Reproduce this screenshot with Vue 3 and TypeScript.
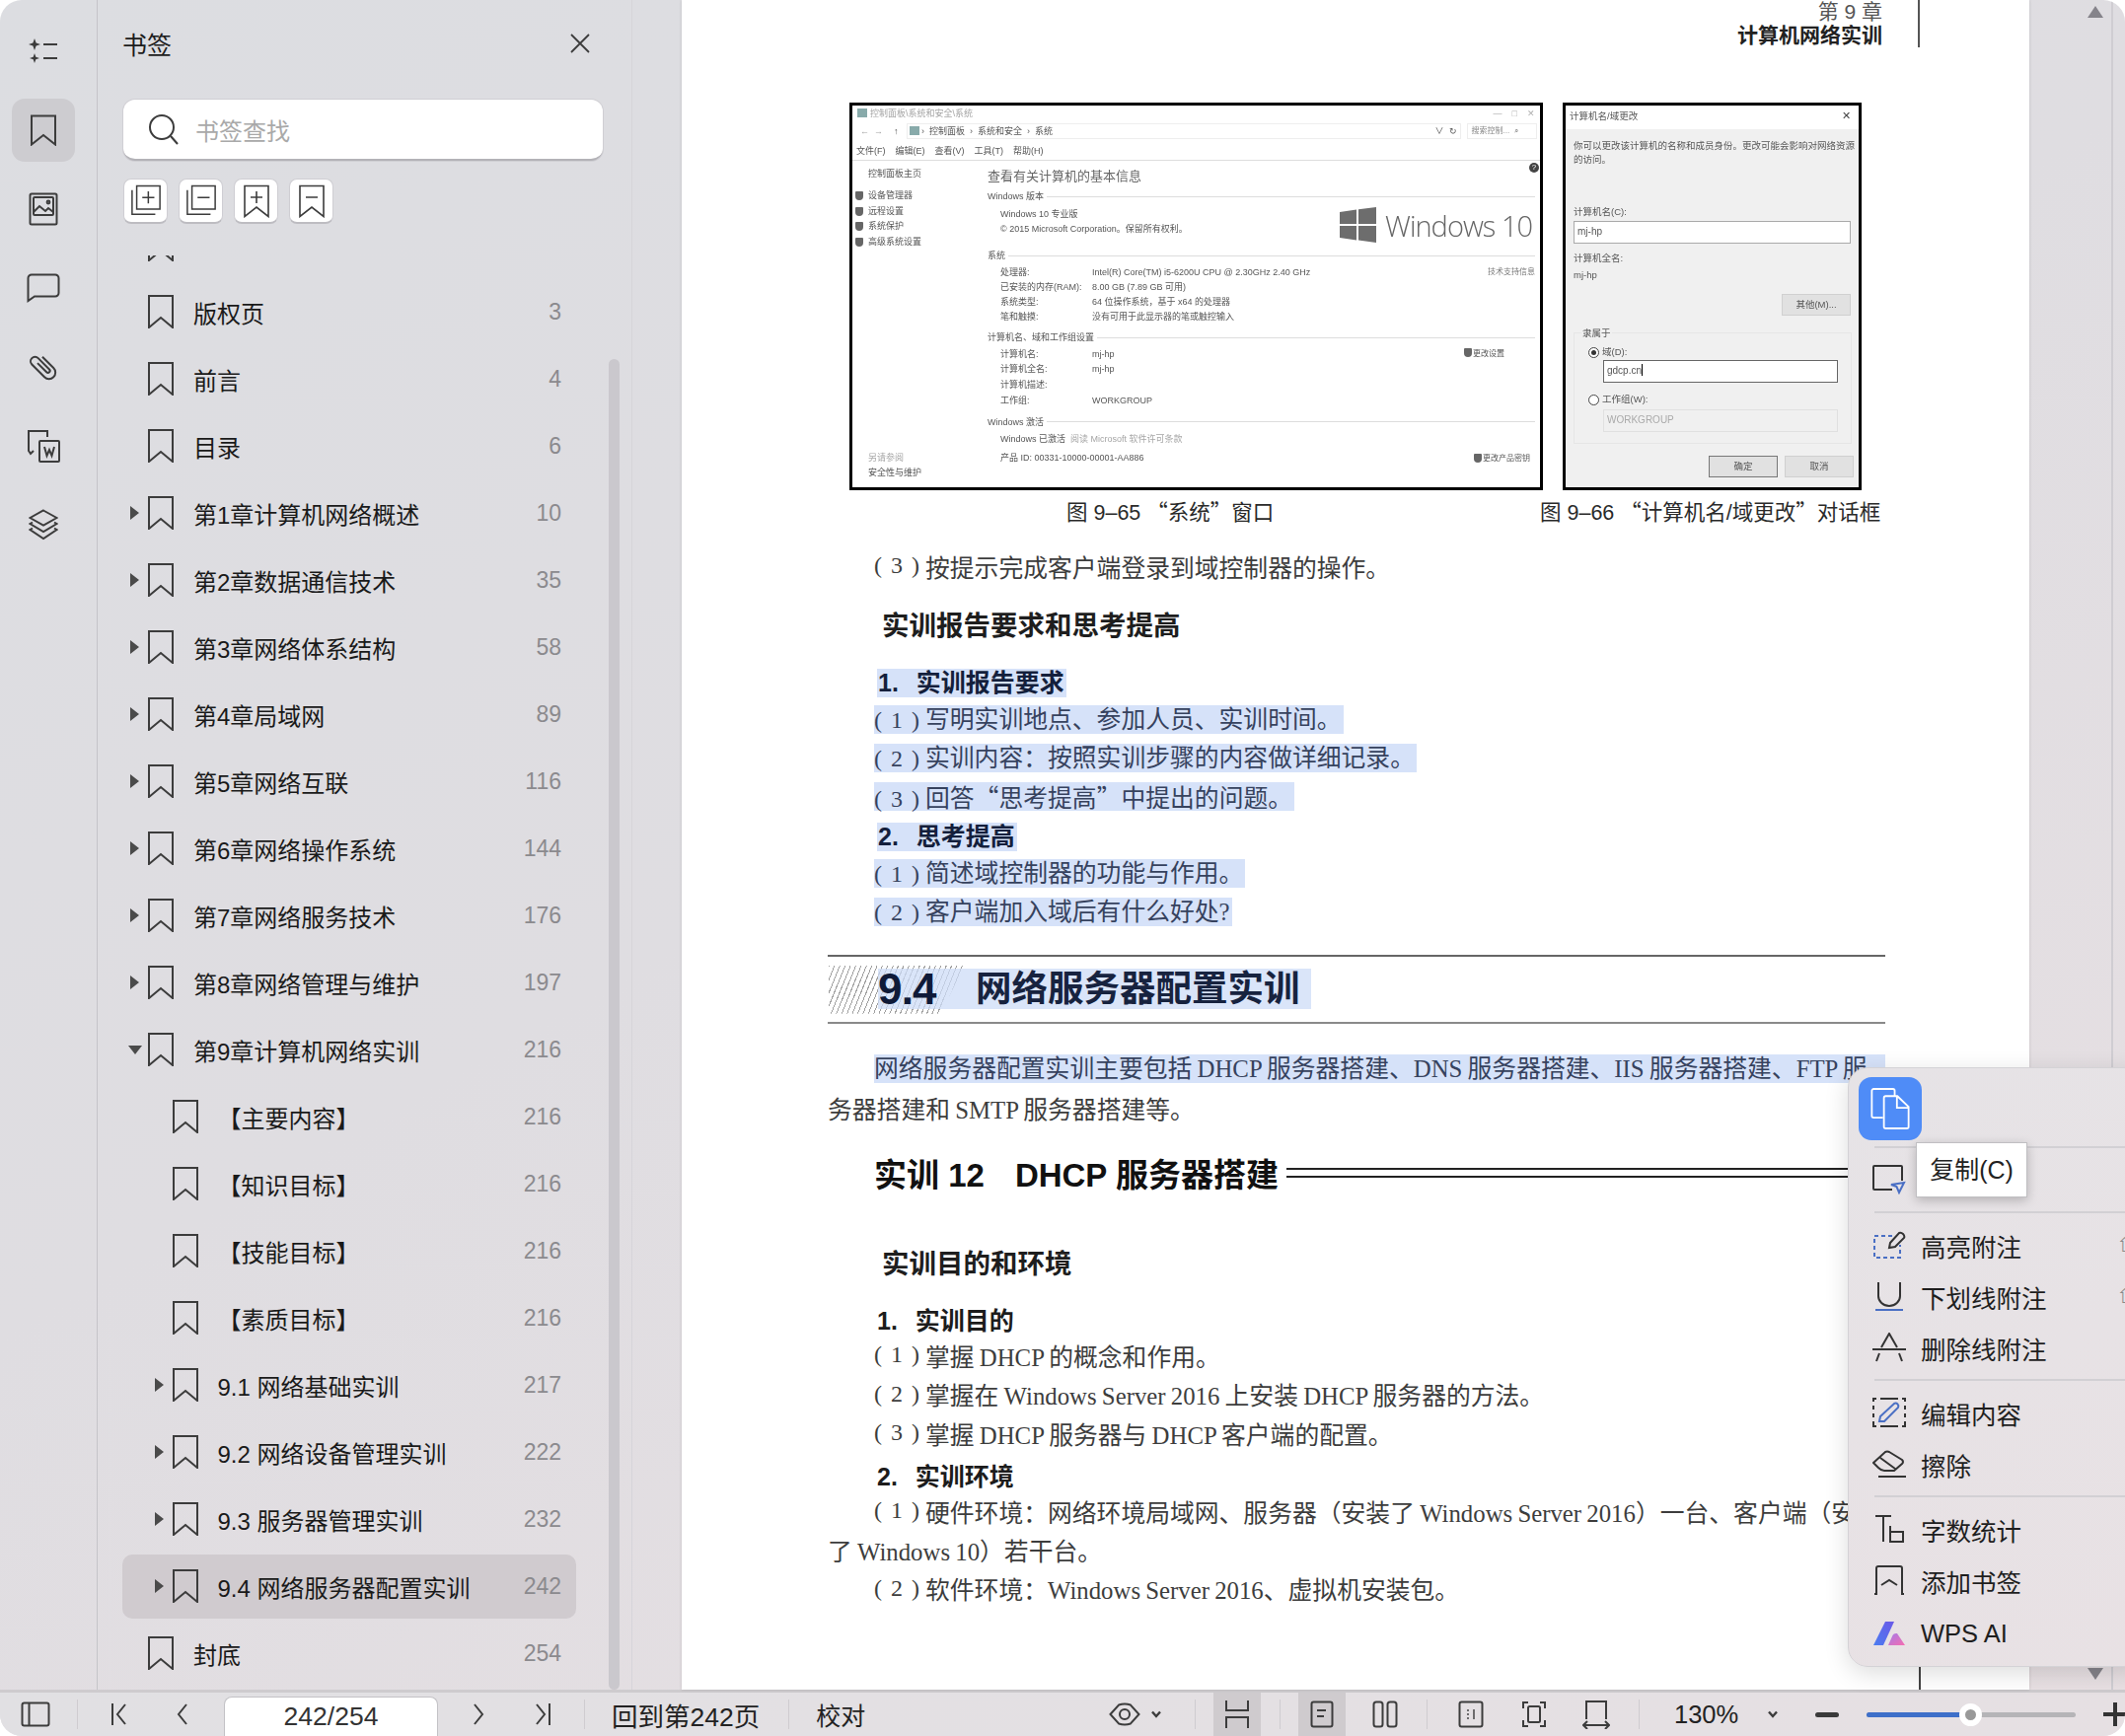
<script setup lang="ts">
interface Row { t: string; p: string; l?: number; a?: boolean; on?: boolean }
const rows: Row[] = [
  { t: '', p: '' },
  { t: '版权页', p: '3' },
  { t: '前言', p: '4' },
  { t: '目录', p: '6' },
  { t: '第1章计算机网络概述', p: '10', a: true },
  { t: '第2章数据通信技术', p: '35', a: true },
  { t: '第3章网络体系结构', p: '58', a: true },
  { t: '第4章局域网', p: '89', a: true },
  { t: '第5章网络互联', p: '116', a: true },
  { t: '第6章网络操作系统', p: '144', a: true },
  { t: '第7章网络服务技术', p: '176', a: true },
  { t: '第8章网络管理与维护', p: '197', a: true },
  { t: '第9章计算机网络实训', p: '216', a: true, on: true },
  { t: '【主要内容】', p: '216', l: 1 },
  { t: '【知识目标】', p: '216', l: 1 },
  { t: '【技能目标】', p: '216', l: 1 },
  { t: '【素质目标】', p: '216', l: 1 },
  { t: '9.1 网络基础实训', p: '217', l: 1, a: true },
  { t: '9.2 网络设备管理实训', p: '222', l: 1, a: true },
  { t: '9.3 服务器管理实训', p: '232', l: 1, a: true },
  { t: '9.4 网络服务器配置实训', p: '242', l: 1, a: true },
  { t: '封底', p: '254' }
]
const sideLinks = ['设备管理器', '远程设置', '系统保护', '高级系统设置']
const sysRows = [
  ['处理器:', 'Intel(R) Core(TM) i5-6200U CPU @ 2.30GHz   2.40 GHz'],
  ['已安装的内存(RAM):', '8.00 GB (7.89 GB 可用)'],
  ['系统类型:', '64 位操作系统，基于 x64 的处理器'],
  ['笔和触摸:', '没有可用于此显示器的笔或触控输入']
]
const nameRows = [
  ['计算机名:', 'mj-hp'],
  ['计算机全名:', 'mj-hp'],
  ['计算机描述:', ''],
  ['工作组:', 'WORKGROUP']
]
</script>

<template>
  <div class="app">
    <div class="main">
      <nav class="rail">
        <div class="rail-item">
          <svg width="32" height="28" viewBox="0 0 32 28" class="ic"><path class="solid" d="M7 1l1.600 4.400L13 7 8.600 8.600 7 13 5.400 8.600 1 7l4.400-1.600zM7 16l1.300 3.700L12 21l-3.700 1.300L7 26l-1.300-3.700L2 21l3.700-1.300z"/><path d="M16 7h14M16 21h14"/></svg>
        </div>
        <div class="rail-item">
          <div class="rail-on"><svg width="28" height="32" viewBox="0 0 28 32" class="ic"><path d="M2 1.500h24v29L14 21 2 30.500z"/></svg></div>
        </div>
        <div class="rail-item">
          <svg width="30" height="34" viewBox="0 0 30 34" class="ic"><rect x="1.500" y="1.500" width="27" height="31" rx="1.500"/><rect x="5" y="5" width="20" height="18" rx="1"/><path d="M5 20l6-6 6 5 3-3 5 4"/><circle cx="20" cy="10" r="1.400"/></svg>
        </div>
        <div class="rail-item">
          <svg width="34" height="30" viewBox="0 0 34 30" class="ic"><path d="M5 1.500h24a3.500 3.500 0 0 1 3.500 3.500v15a3.500 3.500 0 0 1-3.500 3.500H8L1.500 28V5A3.500 3.500 0 0 1 5 1.500z"/></svg>
        </div>
        <div class="rail-item">
          <svg width="34" height="34" viewBox="0 0 34 34" class="ic"><g transform="rotate(-45 17 17)"><path d="M23.500 9v16a6.500 6.500 0 0 1-13 0V7a4.500 4.500 0 0 1 9 0v16a2 2 0 0 1-4 0V10"/></g></svg>
        </div>
        <div class="rail-item">
          <svg width="34" height="34" viewBox="0 0 34 34" class="ic"><path d="M21 8V2H2v20l2 3 3-3"/><rect x="13" y="12" width="20" height="21" rx="1"/><path d="M18 18l2.500 9 2.500-6 2.500 6 2.500-9"/></svg>
        </div>
        <div class="rail-item">
          <svg width="30" height="32" viewBox="0 0 30 32" class="ic"><path d="M15 1.500 28.500 9 15 16.500 1.500 9zM4 13.500 1.500 15 15 23l13.500-8-2.500-1.500M4 19.500 1.500 21 15 30l13.500-9-2.500-1.500"/></svg>
        </div>
      </nav>

      <aside class="panel">
        <div class="panel-head">
          <span class="panel-title">书签</span>
          <svg class="close ic" width="22" height="22" viewBox="0 0 22 22"><path d="M2 2l18 18M20 2 2 20"/></svg>
        </div>
        <div class="search">
          <svg width="32" height="32" viewBox="0 0 32 32" class="ic"><circle cx="14" cy="14" r="12"/><path d="M23 23l7 8"/></svg>
          <span>书签查找</span>
        </div>
        <div class="tools">
          <div class="tool"><svg width="34" height="36" viewBox="0 0 34 36" class="ic thin"><path d="M7 1.500h25v25H7zM13 14h13M19.500 7.500v13"/><path d="M2 6v26h25"/></svg></div>
          <div class="tool"><svg width="34" height="36" viewBox="0 0 34 36" class="ic thin"><path d="M7 1.500h25v25H7zM13 14h13"/><path d="M2 6v26h25"/></svg></div>
          <div class="tool"><svg width="28" height="34" viewBox="0 0 28 34" class="ic thin"><path d="M2 1.500h24v31L14 23 2 32.500zM8 13h12M14 7v12"/></svg></div>
          <div class="tool"><svg width="28" height="34" viewBox="0 0 28 34" class="ic thin"><path d="M2 1.500h24v31L14 23 2 32.500zM8 13h12"/></svg></div>
        </div>
        <div class="list">
          <div class="list-in">
            <div v-for="(r, i) in rows" :key="i" class="row" :class="{ nested: r.l, cur: i === 20 }">
              <span class="arrow"><i v-if="r.a" :class="{ down: r.on }"></i></span>
              <svg width="26" height="34" viewBox="0 0 26 34" class="ic bm"><path d="M1 1h24v32L13 23 1 33z"/></svg>
              <span class="row-t">{{ r.t }}</span>
              <span class="row-p">{{ r.p }}</span>
            </div>
          </div>
        </div>
        <div class="thumb"></div>
      </aside>

      <section class="page">
        <div class="doc">
          <div class="head"><div class="h1">第 9 章</div><div class="h2">计算机网络实训</div></div>
          <div class="figs">
            <div class="fig fig-a">
              <div class="w-title">
                <span class="pc"></span><span class="dim">控制面板\系统和安全\系统</span>
                <span class="w-ctl">—&nbsp;&nbsp;&nbsp;&nbsp;□&nbsp;&nbsp;&nbsp;&nbsp;✕</span>
              </div>
              <div class="w-addr">
                <span class="dim">←&nbsp;&nbsp;→&nbsp;&nbsp;</span><b>↑</b>
                <div class="addr-box"><span class="pc"></span>&nbsp;›&nbsp;&nbsp;控制面板&nbsp;&nbsp;›&nbsp;&nbsp;系统和安全&nbsp;&nbsp;›&nbsp;&nbsp;系统<span class="addr-end">∨&nbsp;&nbsp;↻</span></div>
                <div class="find">搜索控制...&nbsp;&nbsp;⌕</div>
              </div>
              <div class="w-menu"><span>文件(F)</span><span>编辑(E)</span><span>查看(V)</span><span>工具(T)</span><span>帮助(H)</span></div>
              <div class="w-body">
                <div class="w-side">
                  <div class="home">控制面板主页</div>
                  <div v-for="s in sideLinks" :key="s" class="link"><span class="shield"></span>{{ s }}</div>
                  <div class="also">
                    <div class="dim">另请参阅</div>
                    <div>安全性与维护</div>
                  </div>
                </div>
                <div class="w-main">
                  <div class="help">?</div>
                  <div class="w-h">查看有关计算机的基本信息</div>
                  <div class="sec">Windows 版本</div>
                  <div class="w-ver">
                    <div class="ver-t">
                      <div class="kv">Windows 10 专业版</div>
                      <div class="kv">© 2015 Microsoft Corporation。保留所有权利。</div>
                    </div>
                    <div class="logo">
                      <svg width="37" height="36" viewBox="0 0 37 36"><path fill="#6d6d6d" d="M0 5l17-2.500V17H0zM19 2.200 37 0v17H19zM0 19h17v14.500L0 31zM19 19h18v17l-18-2.500z"/></svg>
                      <span>Windows 10</span>
                    </div>
                  </div>
                  <div class="sec sec2">系统</div>
                  <div v-for="r in sysRows" :key="r[0]" class="kv grid"><span>{{ r[0] }}</span><span>{{ r[1] }}</span></div>
                  <span class="tech">技术支持信息</span>
                  <div class="sec sec3">计算机名、域和工作组设置</div>
                  <div v-for="r in nameRows" :key="r[0]" class="kv grid tall"><span>{{ r[0] }}</span><span>{{ r[1] }}</span></div>
                  <span class="change"><i class="shield"></i>更改设置</span>
                  <div class="sec sec4">Windows 激活</div>
                  <div class="kv act">Windows 已激活&nbsp;&nbsp;<span class="dim">阅读 Microsoft 软件许可条款</span></div>
                  <div class="kv pid">产品 ID: 00331-10000-00001-AA886<span class="key"><i class="shield"></i>更改产品密钥</span></div>
                </div>
              </div>
            </div>
            <div class="fig fig-b">
              <div class="d-title"><span>计算机名/域更改</span><span class="d-x">✕</span></div>
              <div class="d-body">
                <div class="d-desc">你可以更改该计算机的名称和成员身份。更改可能会影响对网络资源的访问。</div>
                <div class="d-label">计算机名(C):</div>
                <div class="d-input">mj-hp</div>
                <div class="d-label l2">计算机全名:</div>
                <div class="d-val">mj-hp</div>
                <div class="d-more"><span class="d-btn">其他(M)...</span></div>
                <div class="d-set">
                  <span class="d-leg">隶属于</span>
                  <div class="d-radio"><i class="r on"></i>域(D):</div>
                  <div class="d-input in2">gdcp.cn<b></b></div>
                  <div class="d-radio r2"><i class="r"></i>工作组(W):</div>
                  <div class="d-input in2 off">WORKGROUP</div>
                </div>
                <div class="d-foot"><span class="d-btn def">确定</span><span class="d-btn">取消</span></div>
              </div>
            </div>
          </div>
          <div class="caps">
            <span class="cap c1">图 9–65 <span class="q">“</span>系统<span class="q">”</span>窗口</span>
            <span class="cap">图 9–66 <span class="q">“</span>计算机名/域更改<span class="q">”</span>对话框</span>
          </div>

          <div class="ln in mt25"><span class="n">( 3 )</span>按提示完成客户端登录到域控制器的操作。</div>
          <h3 class="subh mt19">实训报告要求和思考提高</h3>
          <div class="lnb mt19"><span class="sel b">1.&nbsp;&nbsp;实训报告要求</span></div>
          <div class="ln in"><span class="sel"><span class="n">( 1 )</span>写明实训地点、参加人员、实训时间。</span></div>
          <div class="ln in"><span class="sel"><span class="n">( 2 )</span>实训内容：按照实训步骤的内容做详细记录。</span></div>
          <div class="ln in"><span class="sel"><span class="n">( 3 )</span>回答<span class="q">“</span>思考提高<span class="q">”</span>中提出的问题。</span></div>
          <div class="lnb"><span class="sel b">2.&nbsp;&nbsp;思考提高</span></div>
          <div class="ln in"><span class="sel"><span class="n">( 1 )</span>简述域控制器的功能与作用。</span></div>
          <div class="ln in"><span class="sel"><span class="n">( 2 )</span>客户端加入域后有什么好处?</span></div>

          <div class="sect">
            <h2 class="sect-t"><span class="s-n">9.4</span><span class="s-t">网络服务器配置实训</span></h2>
          </div>

          <div class="para">
            <div class="ln in"><span class="sel wide">网络服务器配置实训主要包括 DHCP 服务器搭建、DNS 服务器搭建、IIS 服务器搭建、FTP 服</span></div>
            <div class="ln">务器搭建和 SMTP 服务器搭建等。</div>
          </div>

          <div class="lab">
            <span>实训 12<span class="gap"></span>DHCP 服务器搭建</span><i></i>
          </div>
          <h3 class="subh mt50">实训目的和环境</h3>
          <div class="block2">
            <div class="lnb plain"><span class="b">1.&nbsp;&nbsp;实训目的</span></div>
            <div class="ln in"><span class="n">( 1 )</span>掌握 DHCP 的概念和作用。</div>
            <div class="ln in"><span class="n">( 2 )</span>掌握在 Windows Server 2016 上安装 DHCP 服务器的方法。</div>
            <div class="ln in"><span class="n">( 3 )</span>掌握 DHCP 服务器与 DHCP 客户端的配置。</div>
            <div class="lnb plain"><span class="b">2.&nbsp;&nbsp;实训环境</span></div>
            <div class="ln in"><span class="n">( 1 )</span>硬件环境：网络环境局域网、服务器（安装了 Windows Server 2016）一台、客户端（安装</div>
            <div class="ln">了 Windows 10）若干台。</div>
            <div class="ln in"><span class="n">( 2 )</span>软件环境：Windows Server 2016、虚拟机安装包。</div>
          </div>
        </div>
        <span class="tail"></span>
      </section>

      <div class="gutter">
        <div class="gut-bar">
          <svg width="16" height="12" viewBox="0 0 16 12"><path fill="#85838a" d="M8 0l8 12H0z"/></svg>
          <svg width="16" height="12" viewBox="0 0 16 12"><path fill="#85838a" d="M8 12 0 0h16z"/></svg>
        </div>
      </div>
    </div>

    <footer class="bar">
      <div class="slot s-first"><svg width="30" height="26" viewBox="0 0 30 26" class="ic"><rect x="1.500" y="1.500" width="27" height="23" rx="2"/><path d="M8.500 2v22"/></svg></div>
      <i class="sep m18"></i>
      <div class="slot m18"><svg width="18" height="24" viewBox="0 0 18 24" class="ic"><path d="M2 1v22M15 2 7 12l8 10"/></svg></div>
      <div class="slot m16"><svg width="14" height="24" viewBox="0 0 14 24" class="ic"><path d="M11 2 3 12l8 10"/></svg></div>
      <div class="page-in">242/254</div>
      <div class="slot m17"><svg width="14" height="24" viewBox="0 0 14 24" class="ic"><path d="M3 2l8 10-8 10"/></svg></div>
      <div class="slot m17"><svg width="18" height="24" viewBox="0 0 18 24" class="ic"><path d="M16 1v22M3 2l8 10L3 22"/></svg></div>
      <i class="sep m18"></i>
      <span class="btn-t back">回到第242页</span>
      <i class="sep m29"></i>
      <span class="btn-t proof">校对</span>
      <span class="spring"></span>
      <div class="right">
        <div class="slot w40"><svg width="32" height="24" viewBox="0 0 32 24" class="ic"><path d="M1.500 12 10 2.500q6-2 12 0L30.500 12 22 21.500q-6 2-12 0z"/><circle cx="16" cy="12" r="5"/></svg></div>
        <div class="slot w24"><svg width="12" height="8" viewBox="0 0 12 8" class="ic bold"><path d="M2 1.500l4 4.500 4-4.500"/></svg></div>
        <i class="sep m27"></i>
        <div class="slot on m18"><svg width="26" height="28" viewBox="0 0 26 28" class="ic"><path d="M2 0v10h22V0M2 28V17h22v11"/></svg></div>
        <i class="sep m19"></i>
        <div class="slot on m18"><svg width="24" height="28" viewBox="0 0 24 28" class="ic"><rect x="1.500" y="1.500" width="21" height="25" rx="2"/><path d="M7 10h9M7 16h7"/></svg></div>
        <div class="slot m16"><svg width="26" height="28" viewBox="0 0 26 28" class="ic"><rect x="1.500" y="1.500" width="9" height="25" rx="2.500"/><rect x="15.500" y="1.500" width="9" height="25" rx="2.500"/></svg></div>
        <i class="sep m18"></i>
        <div class="slot m20"><svg width="26" height="28" viewBox="0 0 26 28" class="ic"><rect x="1.500" y="1.500" width="23" height="25" rx="2"/><path class="hair" d="M10 9v2M10 13v2M10 17v2M16 9v10"/></svg></div>
        <div class="slot m16"><svg width="26" height="28" viewBox="0 0 26 28" class="ic"><path d="M7 2H2v6M19 2h5v6M7 26H2v-6M19 26h5v-6"/><rect x="7" y="6" width="12" height="16" rx="1.500"/></svg></div>
        <div class="slot m15"><svg width="28" height="30" viewBox="0 0 28 30" class="ic"><path d="M4 20V2h20v18"/><path d="M1 26h26M5 22l-4 4 4 4M23 22l4 4-4 4"/></svg></div>
        <i class="sep m19"></i>
        <span class="btn-t zoom">130%</span>
        <div class="slot w24 m21"><svg width="12" height="8" viewBox="0 0 12 8" class="ic bold"><path d="M2 1.500l4 4.500 4-4.500"/></svg></div>
        <div class="slot w40 m23"><span class="minus"></span></div>
        <div class="slider">
          <span class="fill"></span>
          <span class="knob"></span>
        </div>
        <div class="slot w40 m20"><span class="plus"></span></div>
      </div>
    </footer>

    <div class="menu">
      <div class="copy">
        <svg width="44" height="46" viewBox="0 0 44 46" fill="none" stroke="#fff" stroke-width="2"><path d="M14 33H3.500a2 2 0 0 1-2-2V3a2 2 0 0 1 2-2H25a2 2 0 0 1 2 2v6"/><path d="M17 9h13l12.500 12v22a2 2 0 0 1-2 2H17a2 2 0 0 1-2-2V11a2 2 0 0 1 2-2zM29.500 9.500V22h13"/></svg>
      </div>
      <div class="tip">复制(C)</div>
      <div class="m-sep"></div>
      <div class="item">
        <span class="m-ic"><svg width="34" height="30" viewBox="0 0 34 30" fill="none" stroke="#333" stroke-width="2"><path d="M20 25H2a1 1 0 0 1-1-1V2a1 1 0 0 1 1-1h27a1 1 0 0 1 1 1v14"/><path stroke="#4a6fc4" d="M19 20l13-2-5 10-2.500-6z"/></svg></span>全选(A)
      </div>
      <div class="m-sep"></div>
      <div class="item">
        <span class="m-ic"><svg width="34" height="28" viewBox="0 0 34 28" fill="none" stroke="#333" stroke-width="2"><path stroke="#4a6fc4" stroke-dasharray="4 3" d="M20 5H2v22h26V14"/><path d="M18 12l9-10q2-1 4 1t1 4l-9 9-6 1z"/></svg></span>高亮附注<span class="key-hint">⇧</span>
      </div>
      <div class="item">
        <span class="m-ic"><svg width="30" height="30" viewBox="0 0 30 30" fill="none" stroke="#333" stroke-width="2"><path d="M4 1v14a11 10 0 0 0 22 0V1"/><path stroke="#4a6fc4" d="M1 29h28"/></svg></span>下划线附注<span class="key-hint">⇧</span>
      </div>
      <div class="item">
        <span class="m-ic"><svg width="34" height="30" viewBox="0 0 34 30" fill="none" stroke="#333" stroke-width="2"><path d="M9 15 17 1l8 14M4 29l3-8M30 29l-3-8"/><path d="M0 17h34"/></svg></span>删除线附注
      </div>
      <div class="m-sep"></div>
      <div class="item">
        <span class="m-ic"><svg width="34" height="32" viewBox="0 0 34 32" fill="none" stroke="#333" stroke-width="2"><path stroke-dasharray="4 4" d="M1 1v30M33 1v30"/><path d="M0 2h4M8 2h18M30 2h4M0 30h4M8 30h18M30 30h4"/><path stroke="#4a6fc4" d="M7 25l1-5L22 7q2-1 3.500.5t.5 3.500L12 25z"/></svg></span>编辑内容
      </div>
      <div class="item">
        <span class="m-ic"><svg width="34" height="28" viewBox="0 0 34 28" fill="none" stroke="#333" stroke-width="2"><path d="M1 13 13 2q2-1 4 0l13 8q2 2 0 4l-8 7H12q-3 0-6-3zM8 8l15 11M6 27h28"/></svg></span>擦除
      </div>
      <div class="m-sep"></div>
      <div class="item">
        <span class="m-ic"><svg width="30" height="30" viewBox="0 0 30 30" fill="none" stroke="#333" stroke-width="2"><path d="M1 2h16M9 2v26"/><path d="M16 12v16h13V18H16"/></svg></span>字数统计
      </div>
      <div class="item">
        <span class="m-ic"><svg width="30" height="30" viewBox="0 0 30 30" fill="none" stroke="#333" stroke-width="2"><path d="M2 29V3a2 2 0 0 1 2-2h22a2 2 0 0 1 2 2v26M7 20l8-5 8 5M0 29h3M27 29h3"/></svg></span>添加书签
      </div>
      <div class="item last">
        <span class="m-ic"><svg width="32" height="24" viewBox="0 0 32 24"><defs><linearGradient id="gb" x1="0" y1="1" x2="1" y2="0"><stop offset="0" stop-color="#4c7df0"/><stop offset="1" stop-color="#6a59e8"/></linearGradient><linearGradient id="gp" x1="0" y1="0" x2="1" y2="1"><stop offset="0" stop-color="#a57be8"/><stop offset="1" stop-color="#f66db0"/></linearGradient></defs><path fill="url(#gb)" d="M0 24 12 0h9L10 24z"/><path fill="url(#gp)" d="M15 24l4-9q1-3 4-3h1l8 12z"/></svg></span>WPS AI
      </div>
    </div>
  </div>
</template>

<style scoped>
.app {
  position: relative;
  width: 2154px;
  height: 1760px;
  overflow: hidden;
  border-radius: 22px;
  display: flex;
  flex-direction: column;
  font-family: "Liberation Sans", "Noto Sans CJK SC", sans-serif;
  color: #1c1c1c;
  background: linear-gradient(150deg, #dcdde1 0%, #dfdde1 45%, #e8e0e3 100%);
}
.main { display: flex; height: 1713px; }
.ic { fill: none; stroke: #3c3c3c; stroke-width: 2; }
.ic.thin { stroke-width: 1.6; }
.ic.bold { stroke-width: 2.400; }
.ic .solid { fill: #3c3c3c; stroke: none; }
.ic .hair { stroke-width: 1.4; }

.rail {
  width: 98px;
  flex: none;
  border-right: 1px solid #c5c4c9;
  padding-top: 12px;
  display: flex;
  flex-direction: column;
  box-sizing: content-box;
}
.rail-item { height: 80px; width: 88px; display: flex; align-items: center; justify-content: center; }
.rail-on { width: 64px; height: 64px; border-radius: 13px; background: #cdccd0; display: flex; align-items: center; justify-content: center; }

.panel { position: relative; width: 592px; flex: none; display: flex; flex-direction: column; padding-left: 26px; box-sizing: border-box; }
.panel::after { content: ""; position: absolute; left: 541px; top: 0; bottom: 0; width: 1px; background: #d6d4d9; }
.panel-head { height: 88px; display: flex; align-items: center; justify-content: space-between; padding-right: 92px; flex: none; }
.panel-title { font-size: 25px; margin-left: -1px; }
.close { stroke-width: 1.8; }
.search {
  width: 486px; height: 62px; margin-top: 13px; background: #fff; border-radius: 12px; flex: none;
  box-sizing: border-box; border-bottom: 2px solid #b3b2b7; box-shadow: 0 0 0 1px #d0cfd4;
  display: flex; align-items: center; padding-left: 25px; gap: 16px; font-size: 24px; color: #a9a9a9;
}
.tools { display: flex; gap: 11px; margin-top: 18px; flex: none; }
.tool {
  width: 45px; height: 46px; background: #fff; border-radius: 8px; box-sizing: border-box;
  border: 1px solid #cfced3; border-bottom: 2px solid #bdbcc1; display: flex; align-items: center; justify-content: center;
}
.tool svg { width: 32px; height: 34px; }
.list { margin-top: 32px; margin-left: -1px; width: 460px; flex: 1; overflow: hidden; }
.list-in { margin-top: -45px; }
.row { height: 68px; display: flex; align-items: center; padding: 0 15px 0 8px; position: relative; }
.row.nested { padding-left: 32.500px; }
.row.cur::before { content: ""; position: absolute; left: 0; right: 0; top: 1.500px; bottom: 1.500px; background: #d0cbcf; border-radius: 10px; z-index: -1; }
.row.cur { z-index: 0; }
.arrow { width: 18px; flex: none; display: flex; }
.arrow i { width: 0; height: 0; border-left: 9px solid #4a4a4a; border-top: 7px solid transparent; border-bottom: 7px solid transparent; }
.arrow i.down { border-left: 7px solid transparent; border-right: 7px solid transparent; border-top: 9px solid #4a4a4a; border-bottom: 0; margin-left: -2px; }
.bm { flex: none; }
.row-t { margin-left: 20px; font-size: 24px; white-space: nowrap; flex: 1; color: #1a1a1a; }
.row-p { font-size: 23px; color: #8b8a8e; padding-top: 1px; }
.thumb { position: absolute; left: 518px; top: 364px; bottom: 0; width: 11px; background: #cac8cd; border-radius: 6px; }

.page {
  position: relative; width: 1366px; flex: none; background: #fff; overflow: hidden;
  box-shadow: 0 0 3px rgba(0,0,0,.15);
}
.doc { padding: 0 146px 0 148px; }
.head { height: 48px; margin-right: -35px; padding-right: 36px; border-right: 2px solid #555; text-align: right; line-height: 24px; }
.h1 { font-size: 21px; color: #555; }
.h2 { font-size: 21px; font-weight: 700; color: #222; }
.figs { display: flex; gap: 20px; margin: 56px 0 0 22px; }
.fig { height: 393px; box-sizing: border-box; border: 3px solid #000; flex: none; overflow: hidden; font-size: 9px; color: #555; filter: blur(.35px); position: relative; }
.fig-a { width: 703px; background: #fff; }
.fig-b { width: 303px; background: #f0f0f0; }
.dim { color: #a5a5a5; }
.w-title { height: 15px; display: flex; align-items: center; padding: 0 5px; gap: 3px; }
.w-ctl { margin-left: auto; color: #b0b0b0; }
.pc { width: 10px; height: 9px; background: #8aa; display: inline-block; }
.w-addr { height: 21px; display: flex; align-items: center; padding: 0 3px 0 8px; gap: 6px; }
.addr-box { width: 558px; height: 14px; display: flex; align-items: center; border: 1px solid #eee; padding-left: 2px; flex: none; margin-left: 2px; }
.addr-end { margin-left: auto; padding-right: 3px; }
.find { flex: 1; height: 14px; border: 1px solid #eee; color: #888; font-size: 8px; line-height: 14px; padding-left: 4px; white-space: nowrap; overflow: hidden; }
.w-menu { height: 19px; display: flex; align-items: center; gap: 10px; padding-left: 4px; border-bottom: 1px solid #ddd; }
.w-body { display: flex; height: 330px; }
.w-side { width: 137px; flex: none; padding-left: 16px; position: relative; box-sizing: border-box; }
.home { margin-top: 6px; height: 15px; line-height: 15px; margin-bottom: 7px; }
.link { height: 15.500px; line-height: 15.500px; display: flex; align-items: center; position: relative; }
.shield { width: 8px; height: 9px; display: inline-block; background: #666; border-radius: 1px 1px 4px 4px; }
.link .shield { position: absolute; left: -13px; }
.also { position: absolute; top: 294px; left: 16px; line-height: 15px; }
.w-main { flex: 1; position: relative; padding-right: 5px; }
.help { position: absolute; right: 1px; top: 2px; width: 10px; height: 10px; border-radius: 50%; background: #444; color: #fff; font-size: 8px; line-height: 10px; text-align: center; }
.w-h { font-size: 13px; margin-top: 6.500px; height: 18px; line-height: 18px; color: #666; }
.sec { margin-top: 4.500px; height: 14px; line-height: 14px; display: flex; align-items: center; gap: 3px; }
.sec::after { content: ""; flex: 1; height: 1px; background: #ddd; }
.sec2 { margin-top: 4px; margin-bottom: 3px; }
.sec3 { margin-top: 6px; margin-bottom: 2.500px; }
.sec4 { margin-top: 6px; }
.w-ver { display: flex; height: 42px; }
.ver-t { padding-top: 3.500px; }
.kv { height: 15px; line-height: 15px; padding-left: 13px; white-space: nowrap; }
.grid { display: flex; }
.grid > span:first-child { width: 93px; }
.tall { height: 15.800px; line-height: 15.800px; }
.logo { margin-left: auto; display: flex; align-items: center; gap: 9px; height: 42px; padding-right: 3px; margin-top: 1px; }
.logo span { font-family: "Open Sans", "Liberation Sans", sans-serif; font-weight: 300; font-size: 29px; color: #666; letter-spacing: -1px; white-space: nowrap; }
.tech { position: absolute; right: 5px; top: 106px; font-size: 8px; color: #777; }
.change { position: absolute; right: 36px; top: 189px; display: flex; align-items: center; gap: 1px; font-size: 8px; }
.kv.act { margin-top: 3px; }
.kv.pid { margin-top: 4px; display: flex; }
.key { margin-left: auto; display: flex; align-items: center; gap: 1px; padding-right: 5px; font-size: 8px; }

.d-title { height: 24px; background: #fff; display: flex; align-items: center; justify-content: space-between; padding: 0 8px 4px 4px; box-sizing: border-box; font-size: 9.500px; }
.d-x { font-size: 11px; color: #444; }
.d-body { padding: 10px 8px 0 8px; font-size: 9.500px; line-height: 14px; }
.d-desc { height: 29px; width: 285px; }
.d-label { margin-top: 38px; height: 14px; }
.d-label.l2 { margin-top: 8px; }
.d-input { height: 23px; margin-top: 2px; background: #fff; border: 1px solid #aaa; box-sizing: border-box; padding-left: 3px; line-height: 20px; font-size: 10px; }
.d-val { margin-top: 3px; height: 14px; }
.d-more { display: flex; justify-content: flex-end; margin-top: 12px; }
.d-btn { width: 70px; height: 22px; background: #e1e1e1; border: 1px solid #d0d0d0; box-sizing: border-box; text-align: center; line-height: 20px; display: inline-block; font-size: 9.500px; }
.d-btn.def { border: 1.500px solid #777; }
.d-set { position: relative; margin-top: 17px; width: 282px; height: 113px; box-sizing: border-box; border: 1px solid #e6e6e6; padding: 12px 14px 0 14px; }
.d-leg { position: absolute; left: 7px; top: -7px; background: #f0f0f0; padding: 0 1px; }
.d-radio { display: flex; align-items: center; gap: 3px; height: 14px; }
.d-radio.r2 { margin-top: 10px; }
.r { width: 9px; height: 9px; border: 1px solid #444; border-radius: 50%; background: #fff; display: block; position: relative; }
.r.on::after { content: ""; position: absolute; inset: 2px; border-radius: 50%; background: #333; }
.in2 { margin: 1px 0 0 15px; width: 238px; border-color: #666; }
.in2 b { display: inline-block; width: 1px; height: 12px; background: #000; vertical-align: -2px; }
.in2.off { margin-top: 3px; background: #f0f0f0; border-color: #e0e0e0; color: #aaa; }
.d-foot { display: flex; justify-content: flex-end; gap: 7px; margin-top: 12px; width: 284px; }

.caps { display: flex; margin: 9px 0 0 242px; line-height: 24px; font-size: 21.500px; color: #2a2a2a; white-space: nowrap; }
.c1 { width: 480px; flex: none; }
.q { font-family: "Noto Sans CJK SC", sans-serif; }

.ln, .lnb {
  height: 39.050px; display: flex; align-items: center; white-space: nowrap; box-sizing: border-box;
  font-family: "Liberation Serif", "Noto Sans CJK SC", serif; font-size: 24.800px; color: #3d3d3d; word-spacing: -1px;
  padding-bottom: 6px;
}
.para .ln { height: 39.300px; padding-bottom: 8px; }
.block2 { margin-top: 17px; }
.block2 .ln, .block2 .lnb { height: 39.450px; }
.block2 .ln { padding-bottom: 8px; }
.in { padding-left: 47px; }
.lnb { padding-left: 50px; font-family: "Liberation Sans", "Noto Sans CJK SC", sans-serif; padding-bottom: 2px; word-spacing: 0; }
.lnb.plain { color: #1c1c1c; }
.n { display: inline-block; width: 52px; word-spacing: 3px; white-space: pre; font-size: 24px; }
.sel { display: inline-block; height: 29px; line-height: 29px; background: #d6e2f9; color: #36425e; padding-right: 2px; }
.b { font-weight: 700; font-size: 25px; color: #141f3c; word-spacing: 2px; }
.lnb.plain .b { color: #1c1c1c; }
.sel.b { padding-left: 1px; line-height: 29px; color: #141f3c; }
.wide { width: 1023px; overflow: hidden; }
.subh { margin: 0; height: 40px; line-height: 40px; padding-left: 55px; font-size: 27.500px; font-weight: 700; color: #1e1e1e; }
.mt25 { margin-top: 25px; } .mt19 { margin-top: 19px; } .mt50 { margin-top: 50px; }

.sect { margin-top: 20.300px; height: 70px; box-sizing: border-box; border-top: 2px solid #666; border-bottom: 2px solid #8a8a8a; display: flex; align-items: center; position: relative; z-index: 0; }
.sect::before { content: ""; position: absolute; z-index: -1; left: 1px; top: 9px; width: 138px; height: 49px; background: repeating-linear-gradient(112deg, #a0a0a0 0 1px, transparent 1px 5px); clip-path: polygon(0 0, 100% 0, 82% 100%, 0 100%); }
.sect-t { margin: 0 0 0 51px; height: 41px; display: flex; align-items: center; background: rgba(205,220,247,.75); padding-right: 11px; line-height: 41px; font-weight: 500; color: #17233f; }
.s-n { font-size: 44px; font-weight: 700; letter-spacing: -.8px; width: 99px; color: #0f1a38; }
.s-t { font-size: 36.500px; font-weight: 700; white-space: nowrap; letter-spacing: 0; }

.para { margin-top: 30.500px; }
.lab { margin-top: 18.900px; height: 46px; display: flex; align-items: center; padding-left: 47px; font-size: 33px; font-weight: 700; color: #111; white-space: nowrap; margin-right: -100px; }
.gap { display: inline-block; width: 31px; }
.lab i { flex: 1; height: 6px; margin-left: 8px; border-top: 2px solid #222; border-bottom: 2px solid #222; }

.tail { position: absolute; left: 1254px; bottom: 0; height: 30px; width: 2px; background: #444; }

.gutter { flex: 1; }
.gut-bar { height: 100%; width: 85px; box-sizing: border-box; border-right: 2px solid #cfcdd2; padding: 6px 8px 10px 0; display: flex; flex-direction: column; justify-content: space-between; align-items: flex-end; }

.bar { height: 47px; flex: none; display: flex; align-items: center; padding-left: 12px; border-top: 3px solid #cecbce; box-sizing: border-box; background: linear-gradient(90deg, #e1e0e3, #e6e0e3); }
.slot { width: 48px; height: 44px; display: flex; align-items: center; justify-content: center; flex: none; }
.slot.on { background: #cfcbce; }
.sep { width: 1px; height: 30px; background: #cfccd0; flex: none; display: block; }
.m15 { margin-left: 15px; } .m16 { margin-left: 16px; } .m17 { margin-left: 17px; } .m18 { margin-left: 18px; } .m19 { margin-left: 19px; } .m20 { margin-left: 20px; } .m21 { margin-left: 21px; } .m23 { margin-left: 23px; } .m27 { margin-left: 27px; } .m29 { margin-left: 29px; }
.w40 { width: 40px; } .w24 { width: 24px; }
.page-in { margin: 4px 0 0 18px; width: 217px; height: 40px; box-sizing: border-box; background: #fff; border: 1px solid #c3c2c6; border-bottom: 0; border-radius: 8px 8px 0 0; text-align: center; line-height: 38px; font-size: 26.500px; color: #333; flex: none; }
.btn-t { font-size: 26.500px; white-space: nowrap; color: #222; flex: none; }
.back { margin-left: 27px; }
.proof { margin-left: 27px; font-size: 25px; }
.spring { flex: 1; }
.right { display: flex; align-items: center; height: 100%; width: 1034px; flex: none; margin-right: 0; }
.zoom { margin-left: 35px; width: 67px; font-size: 25.500px; }
.minus { width: 24px; height: 5px; background: #3a3a3a; border-radius: 3px; }
.plus { width: 24px; height: 24px; background: linear-gradient(#333,#333) center/24px 4px no-repeat, linear-gradient(#333,#333) center/4px 24px no-repeat; }
.slider { position: relative; margin-left: 20px; width: 212px; height: 5px; background: #b5b4b7; border-radius: 3px; flex: none; }
.fill { position: absolute; left: 0; top: 0; bottom: 0; width: 106px; background: #3e6fc9; border-radius: 3px; }
.knob { position: absolute; left: 94px; top: -9px; width: 23px; height: 23px; box-sizing: border-box; background: #999; border: 6px solid #fff; border-radius: 50%; }

.menu {
  position: absolute; left: 1873px; top: 1082px; width: 300px; height: 608px; box-sizing: border-box;
  background: linear-gradient(160deg, #e6e3e6, #e8e1e4); border-radius: 20px; border: 1px solid #d4d2d6;
  box-shadow: 0 6px 24px rgba(0,0,0,.14); padding-top: 9px;
}
.copy { width: 64px; height: 64px; margin-left: 10px; background: #4f8cf7; border-radius: 13px; display: flex; align-items: center; justify-content: center; }
.copy svg { width: 40px; height: 42px; }
.tip { position: absolute; left: 68px; top: 75px; width: 113px; height: 56px; box-sizing: border-box; background: #fff; border: 1px solid #c0bfc2; box-shadow: 0 3px 10px rgba(0,0,0,.22); text-align: center; line-height: 54px; font-size: 25px; color: #222; z-index: 2; }
.m-sep { height: 2px; background: #d2d0d4; margin: 6px 0 6px 26px; }
.item { height: 52px; display: flex; align-items: center; font-size: 25.500px; color: #1e1e1e; white-space: nowrap; padding-right: 10px; }
.item.last { margin-top: 2px; }
.m-ic { width: 48px; margin: 0 8px 0 17px; display: flex; justify-content: center; flex: none; }
.key-hint { margin-left: auto; font-family: "DejaVu Sans", sans-serif; font-size: 20px; color: #8a8a8a; }
</style>

<style>
html, body { margin: 0; background: #fff; }
</style>
